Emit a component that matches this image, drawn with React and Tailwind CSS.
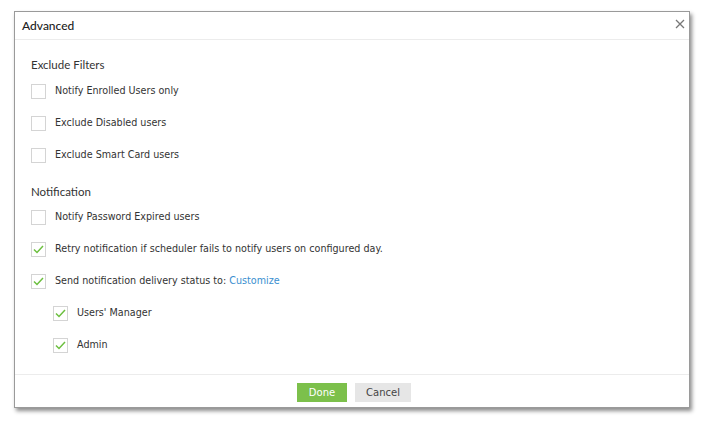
import React from "react";

function Check({ checked }) {
  return (
    <span className="flex h-[15px] w-[15px] shrink-0 items-center justify-center border border-[#d4d4d4] bg-white">
      {checked && (
        <svg width="11" height="9" viewBox="0 0 11 9" fill="none">
          <path d="M1 4.5 L4 7.5 L10 1" stroke="#6cbf3f" strokeWidth="1.5" />
        </svg>
      )}
    </span>
  );
}

function Row({ checked, children, indent }) {
  return (
    <div className={`flex h-[32px] items-center gap-[9px] ${indent ? "pl-[22px]" : ""}`}>
      <Check checked={checked} />
      <span className="text-[9.6px] text-[#333]">{children}</span>
    </div>
  );
}

export default function App() {
  return (
    <div className="h-[422px] w-[704px] bg-white pl-[14px] pt-[11px] font-['DejaVu_Sans',sans-serif]">
      <div className="flex h-[397px] w-[676px] flex-col border border-[#9a9a9a] bg-white shadow-[2px_3px_4px_rgba(0,0,0,0.45)]">
        <div className="flex h-[28px] items-center justify-between border-b border-[#ececec] pl-[7px] pr-[4px]">
          <span className="font-['Lato',sans-serif] text-[12px] font-medium text-[#222]">Advanced</span>
          <svg className="mb-[4px]" width="10" height="10" viewBox="0 0 10 10">
            <path d="M1 1 L9 9 M9 1 L1 9" stroke="#777" strokeWidth="1.3" />
          </svg>
        </div>
        <div className="flex-1 pl-[16px] pt-[16px]">
          <div className="font-['Lato',sans-serif] text-[11.5px] text-[#333]">Exclude Filters</div>
          <div className="mt-[2px]">
            <Row>Notify Enrolled Users only</Row>
            <Row>Exclude Disabled users</Row>
            <Row>Exclude Smart Card users</Row>
          </div>
          <div className="mt-[12px] font-['Lato',sans-serif] text-[11.5px] text-[#333]">Notification</div>
          <div className="mt-[1px]">
            <Row>Notify Password Expired users</Row>
            <Row checked>Retry notification if scheduler fails to notify users on configured day.</Row>
            <Row checked>
              Send notification delivery status to: <span className="text-[#3a8fd0]">Customize</span>
            </Row>
            <Row checked indent>Users' Manager</Row>
            <Row checked indent>Admin</Row>
          </div>
        </div>
        <div className="flex h-[33px] items-center justify-center gap-[8px] border-t border-[#ececec] pl-[4px] pt-[3px]">
          <button className="h-[19px] w-[50px] bg-[#7cc04b] text-[10px] text-white">Done</button>
          <button className="h-[19px] w-[56px] bg-[#e6e6e6] text-[10px] text-[#444]">Cancel</button>
        </div>
      </div>
    </div>
  );
}
